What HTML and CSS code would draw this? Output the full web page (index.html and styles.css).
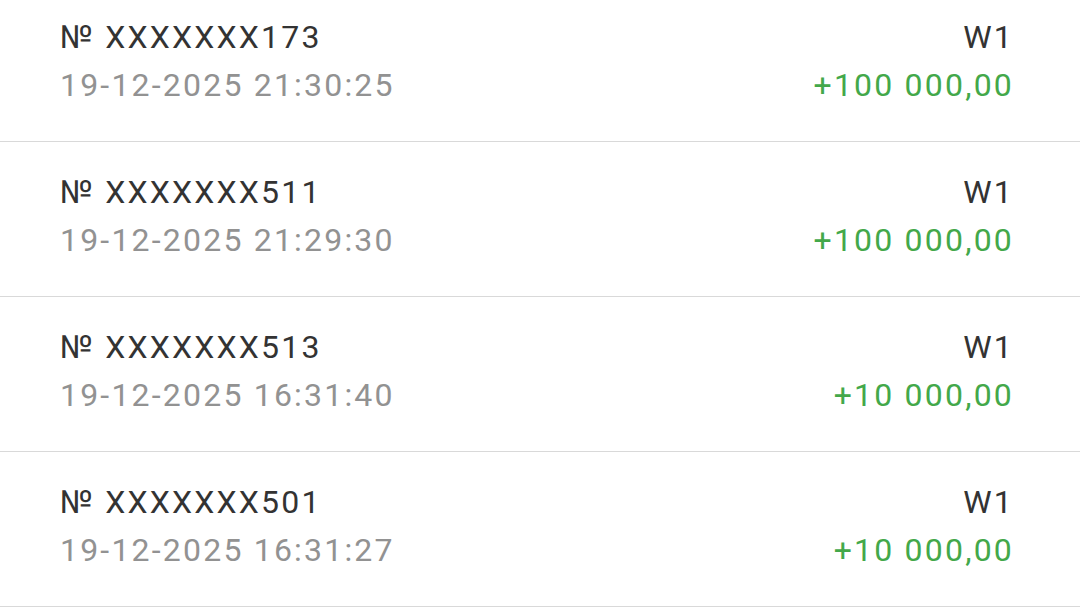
FILE: index.html
```html
<!DOCTYPE html>
<html lang="en">
<head>
    <meta charset="UTF-8">
    <meta name="viewport" content="width=device-width, initial-scale=1.0">
    <title>Operations</title>
    <link rel="stylesheet" href="styles.css">
</head>
<body>
    <div class="list">
        <div class="row">
            <div class="info">
                <div class="number">№ XXXXXXX173</div>
                <div class="date">19-12-2025 21:30:25</div>
            </div>
            <div class="side">
                <div class="wallet">W1</div>
                <div class="amount">+100 000,00</div>
            </div>
        </div>
        <div class="row">
            <div class="info">
                <div class="number">№ XXXXXXX511</div>
                <div class="date">19-12-2025 21:29:30</div>
            </div>
            <div class="side">
                <div class="wallet">W1</div>
                <div class="amount">+100 000,00</div>
            </div>
        </div>
        <div class="row">
            <div class="info">
                <div class="number">№ XXXXXXX513</div>
                <div class="date">19-12-2025 16:31:40</div>
            </div>
            <div class="side">
                <div class="wallet">W1</div>
                <div class="amount">+10 000,00</div>
            </div>
        </div>
        <div class="row">
            <div class="info">
                <div class="number">№ XXXXXXX501</div>
                <div class="date">19-12-2025 16:31:27</div>
            </div>
            <div class="side">
                <div class="wallet">W1</div>
                <div class="amount">+10 000,00</div>
            </div>
        </div>
    </div>
</body>
</html>
```

FILE: styles.css
```css
body {
    margin: 0;
    background: #ffffff;
    font-family: Roboto, "Noto Sans", sans-serif;
    font-size: 32px;
    line-height: 48px;
    letter-spacing: 2.2px;
    overflow: hidden;
}
.list {
    margin-top: -13px;
}
.row {
    display: flex;
    justify-content: space-between;
    padding: 26px 66px 32px 60px;
    border-bottom: 1px solid #d9d9d9;
}
.side {
    text-align: right;
}
.number,
.wallet {
    color: #333333;
}
.date {
    color: #929292;
}
.amount {
    color: #43a84a;
}
```
